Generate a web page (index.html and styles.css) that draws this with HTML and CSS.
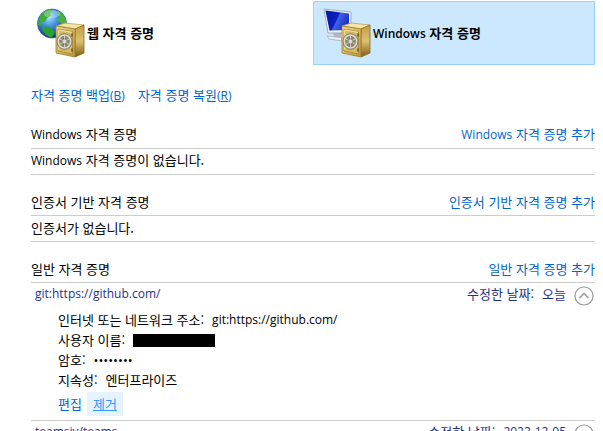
FILE: index.html
```
<!DOCTYPE html>
<html lang="ko">
<head>
    <meta charset="UTF-8">
    <meta name="viewport" content="width=device-width, initial-scale=1.0">
    <title>자격 증명 관리자</title>
    <link rel="stylesheet" href="styles.css">
</head>
<body>

    <!-- 금고, 화살표 아이콘 -->
    <svg class="defs" width="0" height="0" aria-hidden="true">
        <defs>
            <linearGradient id="gold" x1="0" y1="0" x2="1" y2="1">
                <stop offset="0" stop-color="#f0dc94"/>
                <stop offset=".5" stop-color="#d8ba5e"/>
                <stop offset="1" stop-color="#b8943c"/>
            </linearGradient>
            <linearGradient id="goldSide" x1="0" y1="0" x2="0" y2="1">
                <stop offset="0" stop-color="#c09c44"/>
                <stop offset=".5" stop-color="#dcc270"/>
                <stop offset="1" stop-color="#7c5a18"/>
            </linearGradient>
            <radialGradient id="sea" cx=".4" cy=".3" r=".7">
                <stop offset="0" stop-color="#a6dcfc"/>
                <stop offset=".4" stop-color="#4595e0"/>
                <stop offset="1" stop-color="#0c3284"/>
            </radialGradient>
            <linearGradient id="screen" x1="0" y1="0" x2="1" y2=".4">
                <stop offset="0" stop-color="#0414a0"/>
                <stop offset=".55" stop-color="#0c22c0"/>
                <stop offset=".6" stop-color="#3f62e6"/>
                <stop offset="1" stop-color="#1c34c8"/>
            </linearGradient>
            <symbol id="safe" viewBox="0 0 30 36">
                <path d="M1 4 10 1 29 3 20 7Z" fill="#f3e4a8" stroke="#b49646" stroke-width=".7"/>
                <path d="M20 7 29 3V31L20 35Z" fill="url(#goldSide)" stroke="#8a6a20" stroke-width=".8"/>
                <path d="M1 4 20 7V35L1 31Z" fill="url(#gold)" stroke="#9c7b2c" stroke-width=".8"/>
                <path d="M3 7 17.500 9.500V32L3 29Z" fill="#d6ba60" stroke="#a08030" stroke-width=".7"/>
                <path d="M3.700 28V8L17 10.300" fill="none" stroke="#faeeb8" stroke-width=".8"/>
                <path d="M17 11.500v3M17 26.500v3" stroke="#6f5518" stroke-width="1.600"/>
                <ellipse cx="9.500" cy="19.500" rx="7.500" ry="7.800" fill="#8f8460" stroke="#77756c" stroke-width=".9"/>
                <ellipse cx="9.500" cy="19.500" rx="6.200" ry="6.500" fill="none" stroke="#dcdcda" stroke-width="1.600"/>
                <path d="M9.500 14v11M5 17l9 5M5 22l9-5" stroke="#d4d4d2" stroke-width="1"/>
                <ellipse cx="9.500" cy="19.500" rx="2.200" ry="2.400" fill="#dcdcda" stroke="#77776f" stroke-width=".6"/>
            </symbol>
            <symbol id="chevron" viewBox="0 0 20 20">
                <circle cx="10" cy="10" r="9" fill="#fff" stroke="#999" stroke-width="1.200"/>
                <path d="M5.500 12 10 7.500 14.500 12" fill="none" stroke="#aaa" stroke-width="1.800"/>
            </symbol>
        </defs>
    </svg>

    <main class="page">
        <nav class="tabs">
            <a class="tab" href="#web">
                <svg class="tab-icon" viewBox="0 0 48 50" aria-hidden="true">
                    <circle cx="15" cy="15.500" r="14.500" fill="url(#sea)" stroke="#174a86" stroke-width=".6"/>
                    <path d="M2 11C4 5 9 2 13 1.500L16 3 13 5 14 8 10 10 8 14 5 14 3 18 1 17Z" fill="#3fae35"/>
                    <path d="M5 20 10 18 15 21 18 24 15 29.500C10 29 6 25 5 20Z" fill="#2c9f35"/>
                    <path d="M21 3C26 5 29 10 29.500 15L26 18 23 14 20 12 23 9 20 6Z" fill="#49b53b"/>
                    <ellipse cx="15" cy="6" rx="8" ry="4" fill="#fff" opacity=".3"/>
                    <use href="#safe" x="18" y="14" width="30" height="36"/>
                </svg>
                <span>웹 자격 증명</span>
            </a>
            <a class="tab active" href="#windows">
                <svg class="tab-icon" viewBox="0 0 48 50" aria-hidden="true">
                    <path d="M10 24 18 25V31L11 30Z" fill="#b4bac2"/>
                    <path d="M4 28 18 29.500 20 33 6 31Z" fill="#eceff3" stroke="#98a0a8" stroke-width=".6"/>
                    <path d="M1 1 28 4V25L5 25Z" fill="#eef1f6" stroke="#8790a0" stroke-width=".7"/>
                    <path d="M2.500 2.500 26 5.500V22L6.500 22.500Z" fill="url(#screen)"/>
                    <use href="#safe" x="18" y="14" width="30" height="36"/>
                </svg>
                <span><span class="en">Windows</span> 자격 증명</span>
            </a>
        </nav>

        <div class="tools">
            <a href="#backup">자격 증명 백업<span class="en">(<u>B</u>)</span></a>
            <a href="#restore">자격 증명 복원<span class="en">(<u>R</u>)</span></a>
        </div>

        <section class="group">
            <div class="row">
                <h2><span class="en">Windows</span> 자격 증명</h2>
                <a href="#add-windows"><span class="en">Windows</span> 자격 증명 추가</a>
            </div>
            <div class="row">
                <p><span class="en">Windows</span> 자격 증명이 없습니다.</p>
            </div>
        </section>

        <section class="group">
            <div class="row">
                <h2>인증서 기반 자격 증명</h2>
                <a href="#add-cert">인증서 기반 자격 증명 추가</a>
            </div>
            <div class="row">
                <p>인증서가 없습니다.</p>
            </div>
        </section>

        <section class="group">
            <div class="row">
                <h2>일반 자격 증명</h2>
                <a href="#add-generic">일반 자격 증명 추가</a>
            </div>

            <article class="credential">
                <div class="credential-head">
                    <span class="en">git:https://github.com/</span>
                    <span class="modified">수정한 날짜:<span>오늘</span></span>
                    <button class="toggle" type="button" aria-label="접기"><svg aria-hidden="true"><use href="#chevron"/></svg></button>
                </div>
                <dl class="details">
                    <div><dt>인터넷 또는 네트워크 주소:</dt><dd class="en">git:https://github.com/</dd></div>
                    <div><dt>사용자 이름:</dt><dd class="masked"></dd></div>
                    <div><dt>암호:</dt><dd class="password">••••••••</dd></div>
                    <div><dt>지속성:</dt><dd>엔터프라이즈</dd></div>
                </dl>
                <div class="actions">
                    <a href="#edit">편집</a>
                    <a class="selected" href="#remove">제거</a>
                </div>
            </article>

            <article class="credential">
                <div class="credential-head">
                    <span class="en">teamsiv/teams</span>
                    <span class="modified">수정한 날짜:<span class="en">2022-12-05</span></span>
                    <button class="toggle" type="button" aria-label="펼치기"><svg class="down" aria-hidden="true"><use href="#chevron"/></svg></button>
                </div>
            </article>
        </section>
    </main>

</body>
</html>
```
FILE: styles.css
```
* {
    box-sizing: border-box;
}
body {
    margin: 0;
    background-color: #fff;
    color: #000;
    font-family: "Noto Sans CJK KR", sans-serif;
    font-size: 13px;
    line-height: 20px;
}
a {
    color: #0066cc;
    text-decoration: none;
}
h2, p, dl, dd {
    margin: 0;
    font-size: 13px;
    font-weight: normal;
}
.en {
    font-family: "Open Sans", sans-serif;
    font-size: 12px;
}
.defs {
    position: absolute;
}
.page {
    height: 100vh;
    overflow: hidden;
    padding: 1px 8px 0 31px;
}
.tabs {
    display: grid;
    grid-template-columns: 1fr 1fr;
}
.tab {
    display: flex;
    align-items: center;
    gap: 2px;
    height: 64px;
    padding-left: 5px;
    border: 1px solid transparent;
    color: #000;
    font-weight: 600;
}
.tab.active {
    padding-left: 9px;
    background-color: #cce8ff;
    border-color: #99d1ff;
}
.tab-icon {
    width: 48px;
    height: 50px;
}
.tools {
    display: flex;
    gap: 13px;
    height: 20px;
    margin: 20px 0 18px;
}
.group {
    margin-bottom: 15px;
}
.row {
    display: flex;
    justify-content: space-between;
    align-items: center;
    height: 26px;
    padding-bottom: 2px;
    border-bottom: 1px solid #ccc;
}
.credential {
    border-bottom: 1px solid #ccc;
}
.credential-head {
    display: flex;
    height: 24px;
    padding: 1px 1px 0 4px;
    color: #1f3287;
}
.modified {
    display: flex;
    gap: 8px;
    margin-left: auto;
}
.toggle {
    width: 20px;
    height: 20px;
    margin: 2px 0 0 8px;
    padding: 0;
    border: none;
    background: none;
    cursor: pointer;
}
.toggle svg {
    display: block;
    width: 20px;
    height: 20px;
}
.toggle .down {
    transform: rotate(180deg);
}
.details {
    padding: 3px 0 0 27px;
}
.details div {
    display: flex;
    align-items: center;
    gap: 8px;
    height: 20px;
}
.details .masked {
    width: 82px;
    height: 13px;
    background-color: #000;
}
.password {
    font-family: "Open Sans", sans-serif;
}
.actions {
    display: flex;
    gap: 5px;
    padding: 2px 0 4px 27px;
}
.actions a {
    padding: 1px 0;
    line-height: 22px;
}
.actions .selected {
    padding: 1px 6px;
    background-color: #e5f3ff;
    color: #3399ff;
    text-decoration: underline;
}
```
